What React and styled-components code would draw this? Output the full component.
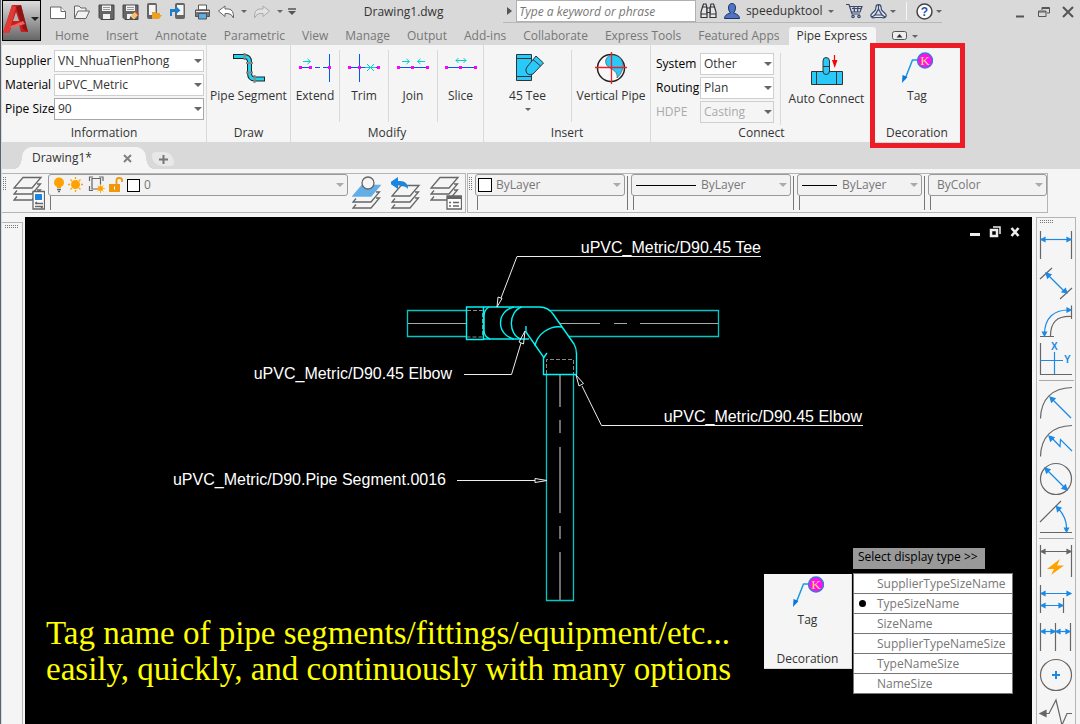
import React, { useState } from 'react';
import styled, { createGlobalStyle, css } from 'styled-components';

const MENU_TABS = ['Home', 'Insert', 'Annotate', 'Parametric', 'View', 'Manage', 'Output', 'Add-ins', 'Collaborate', 'Express Tools', 'Featured Apps', 'Pipe Express'];
const DISPLAY_TYPES = ['SupplierTypeSizeName', 'TypeSizeName', 'SizeName', 'SupplierTypeNameSize', 'TypeNameSize', 'NameSize'];

export default function App() {
    const [activeTab, setActiveTab] = useState('Pipe Express');

    return (
        <Window>
            <GlobalStyle />
            <Header>
                <AppButton aria-label="Application menu">
                    <LogoIcon />
                    <Caret $dark />
                </AppButton>
                <HeaderRows>
                    <TitleBar />
                    <MenuTabs>
                        {MENU_TABS.map(tab => (
                            <MenuTab key={tab} $active={tab === activeTab} onClick={() => setActiveTab(tab)}>{tab}</MenuTab>
                        ))}
                        <RibbonToggle aria-label="Minimize ribbon"><ToggleIcon /><Caret $small /></RibbonToggle>
                    </MenuTabs>
                </HeaderRows>
            </Header>
            <Ribbon />
            <FileTabs>
                <FileTab>
                    <span>Drawing1*</span>
                    <TabClose aria-label="Close drawing"><CrossIcon /></TabClose>
                </FileTab>
                <NewTab aria-label="New drawing"><PlusIcon /></NewTab>
            </FileTabs>
            <PropertyBar />
            <WorkArea>
                <LeftRail><RailBox><Grip $across /></RailBox></LeftRail>
                <DrawingArea />
                <DimensionBar />
            </WorkArea>
        </Window>
    )
}

function TitleBar() {
    return (
        <TitleRow>
            <QuickAccess>
                <IconButton aria-label="New"><NewIcon /></IconButton>
                <IconButton aria-label="Open"><OpenIcon /></IconButton>
                <IconButton aria-label="Save"><SaveIcon /></IconButton>
                <IconButton aria-label="Save as"><SaveIcon pencil /></IconButton>
                <IconButton aria-label="Open from mobile"><PhoneIcon folder /></IconButton>
                <IconButton aria-label="Save to mobile"><PhoneIcon /></IconButton>
                <IconButton aria-label="Plot"><PrintIcon /></IconButton>
                <IconButton aria-label="Undo"><UndoIcon /></IconButton>
                <CaretButton aria-label="Undo list"><Caret $small /></CaretButton>
                <IconButton aria-label="Redo"><UndoIcon redo /></IconButton>
                <CaretButton aria-label="Redo list"><Caret $small /></CaretButton>
                <CaretButton aria-label="Customize"><CustomizeIcon /></CaretButton>
            </QuickAccess>
            <FileName>Drawing1.dwg</FileName>
            <InfoCenter>
                <Expand aria-label="Expand search"><svg width="5" height="8"><path d="M0 0L5 4L0 8z" fill="#555" /></svg></Expand>
                <Search type="text" placeholder="Type a keyword or phrase" aria-label="Search" />
                <IconButton aria-label="Find"><BinocularsIcon /></IconButton>
                <UserButton><UserIcon />speedupktool<Caret $small /></UserButton>
                <IconButton aria-label="Store"><CartIcon /></IconButton>
                <IconButton aria-label="Autodesk 360"><TriangleIcon /></IconButton>
                <Caret $small />
                <Divider />
                <IconButton aria-label="Help"><HelpIcon /></IconButton>
                <Caret $small />
            </InfoCenter>
            <WindowButtons>
                <IconButton aria-label="Minimize"><svg width="12" height="16"><path d="M2 12.5H10" stroke="#555" strokeWidth="2" /></svg></IconButton>
                <IconButton aria-label="Restore"><RestoreIcon /></IconButton>
                <IconButton aria-label="Close"><svg width="12" height="12"><path d="M1 1L11 11M11 1L1 11" stroke="#555" strokeWidth="2" /></svg></IconButton>
            </WindowButtons>
        </TitleRow>
    )
}

function Field({ id, label, value, disabled, focused }) {
    return (
        <>
            <FieldLabel htmlFor={id} $disabled={disabled}>{label}</FieldLabel>
            <ComboBox $focused={focused} $disabled={disabled}>
                <select id={id} disabled={disabled} defaultValue={value}><option>{value}</option></select>
                <Caret />
            </ComboBox>
        </>
    )
}

function Ribbon() {
    return (
        <RibbonRow>
            <Panel $width={205}>
                <PanelBody>
                    <Fields $inset={3} $columns="49px 150px">
                        <Field id="supplier" label="Supplier" value="VN_NhuaTienPhong" />
                        <Field id="material" label="Material" value="uPVC_Metric" />
                        <Field id="size" label="Pipe Size" value="90" focused />
                    </Fields>
                </PanelBody>
                <PanelTitle>Information</PanelTitle>
            </Panel>
            <Panel $width={84}>
                <PanelBody>
                    <Tool><SegmentIcon />Pipe Segment</Tool>
                </PanelBody>
                <PanelTitle>Draw</PanelTitle>
            </Panel>
            <Panel $width={193}>
                <PanelBody>
                    <Tool $width={48}><ExtendIcon />Extend</Tool>
                    <Tool $width={49}><TrimIcon />Trim</Tool>
                    <Tool $width={49}><JoinIcon />Join</Tool>
                    <Tool><SliceIcon />Slice</Tool>
                </PanelBody>
                <PanelTitle>Modify</PanelTitle>
            </Panel>
            <Panel $width={167}>
                <PanelBody>
                    <Tool $width={87}><TeeIcon />45 Tee<Caret $small /></Tool>
                    <Tool><VerticalIcon />Vertical Pipe</Tool>
                </PanelBody>
                <PanelTitle>Insert</PanelTitle>
            </Panel>
            <Panel $width={222}>
                <PanelBody $low>
                    <Fields $inset={5} $columns="44px 74px">
                        <Field id="system" label="System" value="Other" />
                        <Field id="routing" label="Routing" value="Plan" />
                        <Field id="hdpe" label="HDPE" value="Casting" disabled />
                    </Fields>
                    <Tool><ConnectIcon />Auto Connect</Tool>
                </PanelBody>
                <PanelTitle>Connect</PanelTitle>
            </Panel>
            <Panel $width={89} $marked>
                <PanelBody>
                    <Tool><TagIcon />Tag</Tool>
                </PanelBody>
                <PanelTitle>Decoration</PanelTitle>
            </Panel>
        </RibbonRow>
    )
}

function PropertyBar() {
    return (
        <PropertyRow>
            <PropertyGroup>
                <Grip />
                <LayerButton aria-label="Layer properties"><LayersIcon kind="properties" /></LayerButton>
                <PropertyCell $width={300}>
                    <PropertyCombo>
                        <LayerStateIcons />
                        <Swatch $small />
                        <select aria-label="Layer" defaultValue="0"><option>0</option></select>
                        <Caret $pale />
                    </PropertyCombo>
                </PropertyCell>
                <LayerButton aria-label="Make current"><LayersIcon kind="current" /></LayerButton>
                <LayerButton aria-label="Layer previous"><LayersIcon kind="previous" /></LayerButton>
                <LayerButton aria-label="Layer states"><LayersIcon kind="states" /></LayerButton>
            </PropertyGroup>
            <PropertyGroup>
                <Grip />
                <PropertyCell $width={150}>
                    <PropertyCombo>
                        <Swatch />
                        <select aria-label="Color" defaultValue="ByLayer"><option>ByLayer</option></select>
                        <Caret $pale />
                    </PropertyCombo>
                </PropertyCell>
                <PropertyCell $width={160} $ruled>
                    <PropertyCombo>
                        <LineSample $width={60} />
                        <select aria-label="Linetype" defaultValue="ByLayer"><option>ByLayer</option></select>
                        <Caret $pale />
                    </PropertyCombo>
                </PropertyCell>
                <PropertyCell $width={125} $ruled>
                    <PropertyCombo>
                        <LineSample $width={35} />
                        <select aria-label="Lineweight" defaultValue="ByLayer"><option>ByLayer</option></select>
                        <Caret $pale />
                    </PropertyCombo>
                </PropertyCell>
                <PropertyCell $width={119} $ruled>
                    <PropertyCombo>
                        <select aria-label="Plot style" defaultValue="ByColor"><option>ByColor</option></select>
                        <Caret $pale />
                    </PropertyCombo>
                </PropertyCell>
            </PropertyGroup>
        </PropertyRow>
    )
}

function DrawingArea() {
    const [displayType, setDisplayType] = useState('TypeSizeName');

    return (
        <Canvas>
            <PipeDrawing />
            <CanvasButtons>
                <IconButton aria-label="Minimize drawing"><svg width="11" height="12"><path d="M0 8.500H10" stroke="#eee" strokeWidth="3" /></svg></IconButton>
                <IconButton aria-label="Restore drawing"><svg width="12" height="12" fill="none" stroke="#eee"><path d="M4 1H11V8" strokeWidth="1.5" /><path d="M2 4H8V10H2z" strokeWidth="2.5" /></svg></IconButton>
                <IconButton aria-label="Close drawing"><svg width="11" height="12"><path d="M1.500 2L8.500 10M8.500 2L1.500 10" stroke="#eee" strokeWidth="2.600" /></svg></IconButton>
            </CanvasButtons>
            <Caption>
                Tag name of pipe segments/fittings/equipment/etc...<br />
                easily, quickly, and continuously with many options
            </Caption>
            <TagPopup>
                <TagCard>
                    <Tool><TagIcon />Tag</Tool>
                    <PanelTitle>Decoration</PanelTitle>
                </TagCard>
                <TypePicker>
                    <legend>Select display type &gt;&gt;</legend>
                    <TypeList>
                        {DISPLAY_TYPES.map(type => (
                            <TypeOption key={type}>
                                <input type="radio" name="displayType" value={type} checked={type === displayType} onChange={e => setDisplayType(e.target.value)} />
                                {type}
                            </TypeOption>
                        ))}
                    </TypeList>
                </TypePicker>
            </TagPopup>
        </Canvas>
    )
}

function PipeDrawing() {
    return (
        <svg width="1007" height="507" viewBox="25 217 1007 507" fill="none">
            <g stroke="#00c8c8" strokeWidth="1.3">
                <path d="M466 310.500H407.500V336.500H466" />
                <path d="M549 310.500H718.500V336.500H569" />
                <path d="M546.500 374V600.500H573.500V374" />
            </g>
            <g stroke="#a8a8a8">
                <path d="M408 323.500H466M559 323.500H600M614 323.500H627M640 323.500H718" />
                <path d="M560 375V407M560 420V433M560 447V513M560 526V539M560 552V600" stroke="#6e6e6e" strokeWidth="2" />
                <path d="M467 310.500H482.500V337H467M546.500 374V359.500H573.500V374" stroke="#888" strokeDasharray="4 2" />
            </g>
            <g stroke="#00f5f5" strokeWidth="1.4">
                <path d="M466.500 307H483.500V339.500H466.500z" />
                <path d="M484 307H540C546 307 550 310 553 314L574 344Q576.500 348 576.500 354V374.500H543.500V357L526 332V326" />
                <path d="M543.500 358L547 353M484 339H529" />
                <path d="M489 307Q484 310 484 316V330Q484 337 490 339M514 307C496 311 496 335 514 339M522 307C508 311 508 335 521 339" />
                <path d="M535 346C537 334 550 325 562 327" />
            </g>
            <g stroke="#eee">
                <path d="M761 256.500H517L501 298M497 307L498 297L502 298.500z" />
                <path d="M464 374.500H511.500L521 343M525 331L519 342L523.500 344z" />
                <path d="M863 425.500H601.500L582 386M576 375L579 386L583.500 383.500z" />
                <path d="M457 480.500H535M547 480.500L535 478.500V482.500z" />
            </g>
            <g fill="#fff" fontFamily='"Liberation Sans", Arial, sans-serif' fontSize="16">
                <text x="761" y="253" textAnchor="end">uPVC_Metric/D90.45 Tee</text>
                <text x="452" y="379" textAnchor="end">uPVC_Metric/D90.45 Elbow</text>
                <text x="862" y="422" textAnchor="end">uPVC_Metric/D90.45 Elbow</text>
                <text x="446" y="485" textAnchor="end">uPVC_Metric/D90.Pipe Segment.0016</text>
            </g>
        </svg>
    )
}

/* dimension toolbar, one drawing per button */
const Blue = props => <g stroke="#1a8ae6" fill="#1a8ae6" strokeWidth="1.2" {...props} />;

function DimensionBar() {
    return (
        <SideBar>
            <Grip $across />
            <DimButton label="Linear">
                <path d="M.5 2V30M31.500 2V30" />
                <Blue><path d="M3 10.500H29" /><path d="M1 10.500L5 8.500V12.500zM31 10.500L27 8.500V12.500z" /></Blue>
            </DimButton>
            <DimButton label="Aligned">
                <path d="M0 12L12 1M20 32L32 21" />
                <Blue><path d="M8 8L25 25" /><path d="M6 6L11 7.500L7.500 11zM27 26L22 25L25.500 21.500z" /></Blue>
            </DimButton>
            <DimButton label="Arc length">
                <path d="M31.500 .5V14M0 31.500H14M10.500 31C10.500 17 17 11 31 11.500" />
                <Blue><path d="M4.500 29C4.500 13 14 5 28 5" fill="none" /><path d="M4.500 31L2.500 27H6.500zM31 5L27 3V7z" /></Blue>
            </DimButton>
            <DimButton label="Ordinate">
                <path d="M.5 0V31.500H32" />
                <Blue><path d="M0 17.500H23M14.500 9V31" /><g stroke="none" fontFamily="Liberation Sans" fontWeight="700" fontSize="10"><text x="11" y="7">X</text><text x="24" y="20">Y</text></g></Blue>
            </DimButton>
            <BarRule />
            <DimButton label="Radius">
                <path d="M.5 31.500C1 12 12 1 32 .5" />
                <Blue><path d="M12 12L31 31" /><path d="M10 10L15 11.500L11.500 15z" /></Blue>
            </DimButton>
            <DimButton label="Jogged">
                <path d="M.5 31.500C1 12 12 1 32 .5" />
                <Blue><path d="M11 12L20 21.500L20.500 14.500L32 26" fill="none" /><path d="M9 11L14 12.500L10.500 16z" /></Blue>
            </DimButton>
            <DimButton label="Diameter">
                <circle cx="16" cy="16" r="15.500" />
                <Blue><path d="M7 7L25 25" /><path d="M5 5L10 6.500L6.500 10zM27 27L22 25.500L25.500 22z" /></Blue>
            </DimButton>
            <DimButton label="Angular">
                <path d="M0 21L21 0M0 31.500H32" />
                <Blue><path d="M18 7Q27 17 26.500 28" fill="none" /><path d="M16.500 5.500L21 7L17.500 10.500zM26.500 31L24.500 27H28.500z" /></Blue>
            </DimButton>
            <BarRule />
            <DimButton label="Quick">
                <path d="M.5 0V32M31.500 0V32M3 6.500H29" />
                <path d="M1 6.500L5 4.500V8.500zM31 6.500L27 4.500V8.500z" fill="#666" />
                <path d="M20 14L7 24H14L11 30L24 20.500H17L20 14z" fill="#ffa200" stroke="none" />
            </DimButton>
            <DimButton label="Baseline">
                <path d="M.5 2V30M23.500 15V30" />
                <Blue><path d="M3 10.500H29M3 22.500H21" /><path d="M1 10.500L5 8.500V12.500zM31 10.500L27 8.500V12.500zM1 22.500L5 20.500V24.500zM23 22.500L19 20.500V24.500z" /></Blue>
            </DimButton>
            <DimButton label="Continue">
                <path d="M.5 2V30M15.500 2V30M30.500 2V30" />
                <Blue><path d="M3 10.500H28" /><path d="M1 10.500L5 8.500V12.500zM15 10.500L11 8.500V12.500zM16 10.500L20 8.500V12.500zM30 10.500L26 8.500V12.500z" /></Blue>
            </DimButton>
            <DimButton label="Center mark">
                <circle cx="16" cy="16" r="15.500" />
                <Blue><path d="M12 16H20M16 12V20" strokeWidth="2" /></Blue>
            </DimButton>
            <DimButton label="Jogged linear">
                <path d="M4 16.500H9L16 3L22 28L27 16.500H32" />
                <path d="M0 16.500L6 13.500V19.500z" fill="#666" />
            </DimButton>
        </SideBar>
    )
}

function DimButton({ label, children }) {
    return (
        <SideButton aria-label={label}>
            <svg width="32" height="32" fill="none" stroke="#666" strokeWidth="1.2" overflow="visible">{children}</svg>
        </SideButton>
    )
}

function LogoIcon() {
    return (
        <svg width="28" height="30" viewBox="0 0 28 30">
            <path d="M9 1H18L25 28H18L16 21H9L6 29H0z" fill="#c81e1e" />
            <path d="M18 1L25 28L20 25L13 3z" fill="#8f1414" />
            <path d="M9 1L13 3L6 29H0z" fill="#e03a34" />
            <path d="M13 8L16 17H10z" fill="#b5b5b5" />
            <path d="M6 23L20 17L22 20L9 24z" fill="#e8645c" />
        </svg>
    )
}

const ToggleIcon = () => (
    <svg width="16" height="10" fill="none"><rect x=".5" y=".5" width="14" height="8" rx="2" stroke="#555" fill="#eee" /><path d="M4.500 6.500L7.500 3L10.500 6.500z" fill="#333" /></svg>
);
const CrossIcon = () => <svg width="9" height="9"><path d="M1 1L8 8M8 1L1 8" stroke="#808080" strokeWidth="2" /></svg>;
const PlusIcon = () => <svg width="9" height="9"><path d="M4.500 0V9M0 4.500H9" stroke="#777" strokeWidth="2" /></svg>;
const CustomizeIcon = () => <svg width="8" height="8"><path d="M0 1H8" stroke="#555" strokeWidth="1.500" /><path d="M0 3H8L4 7z" fill="#555" /></svg>;

const NewIcon = () => (
    <svg width="16" height="16" fill="#fff" stroke="#666"><path d="M.5 3H11L15.500 7.500V14.500H.5z" /><path d="M11 3V7.500H15.500" /></svg>
);
const OpenIcon = () => (
    <svg width="16" height="16" fill="#f2f2f2" stroke="#666"><path d="M.5 14V2H5L7 4H12V7" /><path d="M.5 14.500L4 7H15.500L12 14.500z" /></svg>
);
const SaveIcon = ({ pencil }) => (
    <svg width="17" height="16">
        <path d="M1 1H16V15.500H3L1 13.500z" fill="#666" stroke="#444" />
        <path d="M4 1.500H13V7H4zM5 10H12V15H5z" fill="#f2f2f2" />
        <path d="M5 3.500H12M5 5.500H12" stroke="#999" />
        {pencil && <><path d="M7 16L8.500 12L12 15.500z" fill="#555" /><path d="M8.500 12L13 8L16 11L12 15.500z" fill="#f5c469" /><path d="M13 8L14 7L17 10L16 11z" fill="#e33" /></>}
    </svg>
);
const PhoneIcon = ({ folder }) => (
    <svg width="16" height="17">
        <rect x={folder ? 1.5 : 5.5} y=".5" width="9" height="15" rx="1" fill="#666" stroke="#666" />
        <path d={folder ? 'M3 2H9.500V12H3z' : 'M7 2H13.500V12H7z'} fill="#f5f5f5" />
        {folder
            ? <path d="M6 16V9H9L10 10H14V12H16L13 16z" fill="#f0a020" />
            : <path d="M0 6H6V3L10.500 7.500L6 11V9H2V13H0z" fill="#1a7fd0" />}
    </svg>
);
const PrintIcon = () => (
    <svg width="17" height="16" stroke="#555"><path d="M4.500 1H12.500V6H4.500z" fill="#fff" /><path d="M1.500 6H15.500V12.500H1.500z" fill="#777" /><path d="M2 7.500H15" stroke="#eee" /><path d="M4.500 9.500H12.500V15H4.500z" fill="#5aaeea" /></svg>
);
const UndoIcon = ({ redo }) => (
    <svg width="17" height="14" fill={redo ? '#e2e2e2' : '#fff'} stroke={redo ? '#aaa' : '#666'}>
        <path d="M.5 6L7 1V4H11Q16 5 15.500 13Q13.500 8.500 10 8.500H7V11.500z" transform={redo ? 'translate(16 0) scale(-1 1)' : undefined} />
    </svg>
);
const BinocularsIcon = () => (
    <svg width="17" height="16" fill="#e4e6ea" stroke="#333" strokeWidth="1.200">
        <path d="M3.500 1H6L7 5V14.500H1V9L2.500 4z" />
        <path d="M11 1H13.500L14.500 4L16 9V14.500H10V5z" />
        <path d="M7 5H10V9.500H7zM2.500 4H7M10 4H14.500M1 11H7M10 11H16" />
    </svg>
);
const UserIcon = () => (
    <svg width="16" height="17" fill="#4f74c4" stroke="#1f3566"><path d="M4.500 5Q4.500 .5 8 .5Q11.500 .5 11.500 5Q11.500 8 9.500 10Q15.500 11.500 15.500 15.500H.5Q.5 11.500 6.500 10Q4.500 8 4.500 5z" /></svg>
);
const CartIcon = () => (
    <svg width="17" height="16" fill="none" stroke="#38486e" strokeWidth="1.200"><path d="M0 1.500H3L6 11H14M3.500 3.500H16L14 9H5.500M6 5.500H15M8 3.500L8.500 9M12 3.500L11.500 9" /><circle cx="7" cy="13.500" r="1.200" /><circle cx="13" cy="13.500" r="1.200" /></svg>
);
const TriangleIcon = () => (
    <svg width="17" height="15" fill="#e5e8ee" stroke="#38486e" strokeWidth="1.200">
        <path d="M6 3Q6 .6 8.500 .6Q11 .6 11 3L11.500 6L15 9.500Q17 11 15.500 13Q14 14.400 12 13.500H5Q3 14.400 1.500 13Q0 11 2 9.500L5.500 6z" />
        <path d="M8.500 5L12 11H5z" fill="#d9d9d9" />
        <path d="M8.500 1V5M5 11L2 13M12 11L15 13" />
    </svg>
);
const HelpIcon = () => (
    <svg width="17" height="17"><circle cx="8.500" cy="8.500" r="7.500" fill="#fff" stroke="#444" strokeWidth="1.500" /><text x="8.500" y="13" textAnchor="middle" fontFamily="Liberation Sans" fontWeight="700" fontSize="12" fill="#2a55b0">?</text></svg>
);
const RestoreIcon = () => (
    <svg width="12" height="12" fill="none" stroke="#555"><path d="M4 4V1.500H11.500V7H9" /><path d="M4 2H11" strokeWidth="2" /><path d="M.500 5H8V10.500H.5zM1 6H8" /></svg>
);

const SegmentIcon = () => (
    <svg width="32" height="32" viewBox="0 0 32 32">
        <path d="M0 4.500H11Q16.500 4.500 16.500 10V21Q16.500 27 22 27H32" fill="none" stroke="#222" strokeWidth="5" />
        <path d="M1 4.500H11Q16.500 4.500 16.500 10V21Q16.500 27 22 27H31" fill="none" stroke="#22d3ee" strokeWidth="3" />
        <path d="M11.500 1V8M13 11H20M13 20.500H20M21.500 23V31" stroke="#888" strokeWidth="2" />
    </svg>
);
const Node = ({ x }) => <rect x={x} y="14" width="3" height="3" fill="#f0f" />;
const ExtendIcon = () => (
    <svg width="32" height="32" fill="none">
        <path d="M1 15.500H11M16 15.500H21M24 15.500H30M30.500 2V30" stroke="#0058f0" />
        <path d="M4 9.500H11M8.500 7L11.500 9.500L8.500 12" stroke="#00d0d0" />
        <Node x={0} /><Node x={10} /><Node x={29} />
    </svg>
);
const TrimIcon = () => (
    <svg width="32" height="32" fill="none">
        <path d="M1 15.500H19M26 15.500H31M11.500 2V30" stroke="#0058f0" />
        <path d="M19 12L26 19M26 12L19 19M17 15.500H28" stroke="#00d0d0" />
        <Node x={0} /><Node x={10} /><Node x={29} />
    </svg>
);
const JoinIcon = () => (
    <svg width="32" height="32" fill="none">
        <path d="M1 15.500H31" stroke="#0058f0" />
        <path d="M5 9.500H12M9.500 7L12.500 9.500L9.500 12M28 9.500H21M23.500 7L20.500 9.500L23.500 12" stroke="#00d0d0" />
        <Node x={0} /><Node x={14} /><Node x={29} />
    </svg>
);
const SliceIcon = () => (
    <svg width="32" height="32" fill="none">
        <path d="M1 15.500H31" stroke="#0058f0" />
        <path d="M11 8.500H21M13.500 6L11 8.500L13.500 11M18.500 6L21 8.500L18.500 11" stroke="#00d0d0" />
        <Node x={0} /><Node x={14} /><Node x={29} />
    </svg>
);
const TeeIcon = () => (
    <svg width="32" height="32" fill="#29c9fa" stroke="#333">
        <path d="M4.500 2.500H19.500V28.500H4.500zM4.500 6.500H19.500M4.500 24.500H19.500" />
        <path d="M15 15L24 4L31.500 11L21 22Q15 24 14 19Q13.500 17 15 15z" />
        <path d="M21 7.500L28.500 14" />
    </svg>
);
const VerticalIcon = () => (
    <svg width="32" height="32" fill="none">
        <circle cx="16" cy="16" r="13.500" fill="#f8f8f8" stroke="#222" strokeWidth="1.500" />
        <path d="M16 3C29 2 32 17 22 26C23 20 18 18 15 16C9 13 9 5 16 3z" fill="#29c9fa" stroke="#555" strokeWidth=".7" />
        <path d="M16.500 0V32M0 15.500H32" stroke="#f02020" strokeWidth="1.300" />
    </svg>
);
const ConnectIcon = () => (
    <svg width="32" height="32" fill="#29c9fa" stroke="#333">
        <path d="M.5 16.500H31.500V29.500H.5zM5.500 16.500V29.500M25.500 16.500V29.500" />
        <path d="M12 11V6Q12 2.500 15 2.500Q18.500 2.500 18.500 6V16Q18.500 19.500 15 19.500Q12 19.500 12 16zM12 11.500H18.500" />
        <path d="M23.500 0V6" stroke="red" strokeWidth="1.200" /><path d="M21 5H26.500L23.700 13z" fill="red" stroke="none" />
    </svg>
);
const TagIcon = () => (
    <svg width="32" height="32">
        <path d="M16 8H11.500L4 27" fill="none" stroke="#189ae0" strokeWidth="1.500" />
        <path d="M1 31L1.500 23L6.500 25z" fill="#0878e0" />
        <circle cx="24" cy="8.500" r="7.500" fill="#ff10f0" stroke="#3878d8" strokeWidth="1.300" />
        <text x="24" y="13" textAnchor="middle" fontFamily="Liberation Serif" fontSize="13" fill="#ffe060">K</text>
    </svg>
);

function LayersIcon({ kind }) {
    const low = kind === 'current' || kind === 'previous';
    return (
        <svg width="32" height="36" fill="none" stroke="#666" strokeWidth="1.300">
            <g transform={low ? 'translate(0 8)' : undefined}>
                <path d="M10 2.500H28L19 13H1z" fill={kind === 'current' ? '#64aee8' : '#f5f5f5'} stroke={kind === 'current' ? '#64aee8' : '#666'} />
                <path d="M24 9H27.500L19 19H1L4 15.500M24 15H27.500L19 25H1L4 21.500" />
            </g>
            {kind === 'current' && <circle cx="16" cy="8" r="6" fill="#f5f5f5" />}
            {kind === 'previous' && <path d="M0 7L9 1V5Q19 4 19 13Q16 9 9 9.500V13z" fill="#1a86e0" stroke="none" transform="translate(-2 1)" />}
            {kind === 'properties' && <g><path d="M20 16.500H31.500V34H20z" fill="#fff" /><path d="M22 19H29V25H22z" fill="#1a86e0" stroke="none" /><path d="M22 28.500H30M22 31.500H30M24 27L22 28.500M28 33L30 31.500" /></g>}
            {kind === 'states' && <g><path d="M17 21H31.500V34H17z" fill="#fff" /><path d="M17 22.500H31.500" strokeWidth="3" /><path d="M19 27.500H21M23 27.500H29M19 31H21M23 31H29" /></g>}
        </svg>
    )
}

const LayerStateIcons = () => (
    <svg width="72" height="18" fill="none">
        <circle cx="8" cy="6.500" r="5" fill="#ffa200" /><path d="M6 9H10V12H6z" fill="#ffa200" /><path d="M6 13.500H10M7 15.500H9" stroke="#666" strokeWidth="1.500" />
        <circle cx="24.500" cy="8.500" r="4.500" fill="#ffa200" />
        <path d="M24.500 1V3M24.500 14V16M17 8.500H19M30 8.500H32M19.500 3.500L21 5M28 12L29.500 13.500M29.500 3.500L28 5M21 12L19.500 13.500" stroke="#ffa200" strokeWidth="1.300" />
        <path d="M41 2.500H49.500V9M47 13H41V2M38.500 5V1H42M48 1H52V5M38.500 10V14.500H42" stroke="#666" strokeWidth="1.200" />
        <circle cx="49.500" cy="12.500" r="2.500" fill="#ffa200" /><path d="M49.500 8V17M45 12.500H54M46.500 9.500L52.500 15.500M52.500 9.500L46.500 15.500" stroke="#ffa200" strokeWidth=".8" />
        <path d="M58 8H69V16H58z" fill="#f0980c" /><path d="M65.500 8V4Q65.500 2 68 2Q71 2 71 4V6" stroke="#f0980c" strokeWidth="1.800" /><path d="M63.500 10.500V13.500" stroke="#fff" />
    </svg>
);

const GlobalStyle = createGlobalStyle`
    * {
        box-sizing: border-box;
    }
    body {
        margin: 0;
        background: #d9d9d9;
    }
    body, button, input, select {
        font-family: "Open Sans", "Segoe UI", sans-serif;
        font-size: 12px;
        line-height: 16px;
        color: #333;
    }
    button {
        padding: 0;
        border: none;
        background: none;
        white-space: nowrap;
    }
    svg {
        display: block;
        flex-shrink: 0;
    }
    select {
        appearance: none;
        min-width: 0;
        border: none;
        outline: none;
        background: transparent;
        opacity: 1;
    }
`

const Window = styled.div`
    height: 100vh;
    padding-left: 1px;
    border-left: 1px solid #5a646c;
    display: flex;
    flex-direction: column;
    overflow: hidden;
`
const Caret = styled.i`
    flex-shrink: 0;
    width: 0;
    border: ${p => (p.$small ? 3 : 4)}px solid transparent;
    border-top-color: ${p => (p.$pale ? '#aaa' : p.$dark ? '#222' : '#666')};
    border-bottom: none;
    pointer-events: none;
`
const Header = styled.header`
    height: 45px;
    flex-shrink: 0;
    display: flex;
`
const AppButton = styled.button`
    width: 39px;
    height: 41px;
    padding-bottom: 4px;
    display: flex;
    align-items: center;
    border: 1px solid #000;
    background: linear-gradient(#dcdcdc, #666);
`
const HeaderRows = styled.div`
    flex: 1;
    min-width: 0;
    display: flex;
    flex-direction: column;
`
const TitleRow = styled.div`
    height: 23px;
    display: flex;
    justify-content: space-between;
    align-items: center;
`
const QuickAccess = styled.div`
    padding-left: 5px;
    display: flex;
    align-items: center;
`
const IconButton = styled.button`
    width: 24px;
    height: 20px;
    display: flex;
    align-items: center;
    justify-content: center;
`
const CaretButton = styled(IconButton)`
    width: 12px;
`
const FileName = styled.div`
    padding-left: 6px;
`
const InfoCenter = styled.div`
    height: 23px;
    margin-right: 6px;
    display: flex;
    align-items: center;
    border-bottom: 1px solid #b8b8b8;
`
const Expand = styled(IconButton)`
    width: 13px;
`
const Search = styled.input`
    width: 180px;
    height: 22px;
    padding: 0 2px;
    border: 1px solid #b0b0b0;
    background: #fff;

    &::placeholder {
        font-style: italic;
        color: #777;
    }
`
const UserButton = styled.button`
    width: 122px;
    padding: 0 8px 0 4px;
    display: flex;
    align-items: center;
    justify-content: space-between;
`
const Divider = styled.div`
    width: 1px;
    height: 18px;
    margin: 0 5px 0 10px;
    background: #f5f5f5;
`
const WindowButtons = styled.div`
    display: flex;
`
const MenuTabs = styled.nav`
    height: 22px;
    padding: 4px 0 0 6px;
    display: flex;
`
const MenuTab = styled.button`
    height: 18px;
    padding: 0 9px 0 8px;
    line-height: 16px;
    color: #777;

    ${p => p.$active && css`
        color: #333;
        border-radius: 3px 3px 0 0;
        background: #f5f5f5;
    `}
`
const RibbonToggle = styled.button`
    margin-left: 16px;
    display: flex;
    align-items: center;
    gap: 4px;
`

const RibbonRow = styled.section`
    flex-shrink: 0;
    display: flex;
`
const Panel = styled.section`
    position: relative;
    width: ${p => p.$width}px;
    flex-shrink: 0;
    border-right: 1px solid #d9d9d9;
    background: #f5f5f5;

    ${p => p.$marked && css`
        &::after {
            content: "";
            position: absolute;
            inset: -2px -4px -6px -3px;
            border: 5px solid #ee1c25;
            pointer-events: none;
        }
    `}
`
const PanelBody = styled.div`
    height: 80px;
    padding-top: ${p => (p.$low ? 8 : 5)}px;
    display: flex;
`
const PanelTitle = styled.div`
    height: 17px;
    text-align: center;
`
const Fields = styled.div`
    padding-left: ${p => p.$inset}px;
    display: grid;
    grid-template-columns: ${p => p.$columns};
    grid-auto-rows: 22px;
    row-gap: 2px;
    align-content: start;
    align-items: center;
`
const FieldLabel = styled.label`
    white-space: nowrap;
    color: ${p => (p.$disabled ? '#aaa' : '#000')};
`
const ComboBox = styled.div`
    height: 22px;
    display: grid;
    align-items: center;
    border: 1px solid ${p => (p.$focused ? '#a8a8a8' : '#cfcfcf')};
    background: ${p => (p.$disabled ? '#f5f5f5' : '#fff')};

    select {
        grid-area: 1 / 1;
        padding: 0 3px;
        color: ${p => (p.$disabled ? '#aaa' : '#333')};
    }
    i {
        grid-area: 1 / 1;
        justify-self: end;
        margin-right: 1px;
    }
`
const Tool = styled.button`
    flex: ${p => (p.$width ? `0 0 ${p.$width}px` : '1 0 auto')};
    height: 72px;
    padding-top: 2px;
    display: flex;
    flex-direction: column;
    align-items: center;
    gap: 4px;

    & + &, ${Fields} + & {
        border-left: 1px solid #d9d9d9;
    }
    ${Fields} + & {
        margin-left: 6px;
    }
`

const FileTabs = styled.nav`
    height: 27px;
    flex-shrink: 0;
    padding-left: 20px;
    display: flex;
    align-items: flex-end;
`
const FileTab = styled.div`
    position: relative;
    width: 124px;
    height: 22px;
    padding: 0 14px 0 10px;
    display: flex;
    align-items: center;
    justify-content: space-between;
    border-radius: 10px 10px 0 0;
    background: #f5f5f5;

    &::before, &::after {
        content: "";
        position: absolute;
        bottom: 0;
        width: 8px;
        height: 12px;
    }
    &::before {
        left: -8px;
        background: radial-gradient(ellipse 8px 12px at 0 0, transparent 98%, #f5f5f5);
    }
    &::after {
        right: -8px;
        background: radial-gradient(ellipse 8px 12px at 100% 0, transparent 98%, #f5f5f5);
    }
`
const TabClose = styled.button``
const NewTab = styled.button`
    width: 22px;
    height: 14px;
    margin: 0 0 3px 6px;
    display: flex;
    align-items: center;
    justify-content: center;
    border-radius: 4px 10px 4px 10px;
    background: #e8e8e8;
`

const PropertyRow = styled.section`
    flex-shrink: 0;
    height: 48px;
    padding-top: 4px;
    display: flex;
    gap: 1px;
    background: #f5f5f5;
`
const PropertyGroup = styled.div`
    height: 40px;
    display: flex;
    border: 1px solid #b5b5b5;
    border-left: none;

    & + & {
        border-left: 1px solid #b5b5b5;
    }
`
/* dots on every second pixel */
const Grip = styled.div`
    flex-shrink: 0;
    width: ${p => (p.$across ? 13 : 3)}px;
    height: ${p => (p.$across ? 3 : 13)}px;
    margin: ${p => (p.$across ? '2px 3px 3px' : '3px 3px 0 1px')};
    background:
        linear-gradient(90deg, transparent 50%, #f5f5f5 50%) 0 0 / 2px 2px,
        linear-gradient(#777 50%, transparent 50%) 0 0 / 2px 2px;
`
const LayerButton = styled.button`
    width: 39px;
    height: 38px;
    display: flex;
    align-items: center;
    justify-content: center;
`
const PropertyCell = styled.div`
    width: ${p => p.$width}px;
    height: 36px;
    position: relative;

    &::after {
        content: "";
        display: block;
        height: 14px;
        margin-left: 2px;
        border-left: 1px solid #777;
    }
    ${p => p.$ruled && css`
        margin-left: 6px;

        &::before {
            content: "";
            position: absolute;
            left: -4px;
            top: 2px;
            bottom: 0;
            border-left: 1px solid #777;
        }
    `}
`
const PropertyCombo = styled.div`
    height: 22px;
    padding: 0 3px 0 2px;
    display: flex;
    align-items: center;
    border: 1px solid #999;
    border-radius: 3px;
    background: #f2f2f2;

    select {
        flex: 1;
        padding: 0 4px;
        color: #777;
    }
    select:first-child {
        padding-left: 6px;
    }
`
const Swatch = styled.span`
    flex-shrink: 0;
    width: ${p => (p.$small ? 13 : 14)}px;
    height: ${p => (p.$small ? 13 : 14)}px;
    margin-left: ${p => (p.$small ? 4 : 0)}px;
    border: 1px solid #000;
    background: #fff;
`
const LineSample = styled.span`
    flex-shrink: 0;
    width: ${p => p.$width}px;
    margin: 0 1px 0 2px;
    border-top: 1px solid #000;
`

const WorkArea = styled.main`
    flex: 1;
    min-height: 0;
    display: flex;
    background: #f5f5f5;
`
const LeftRail = styled.aside`
    width: 23px;
    flex-shrink: 0;
    padding: 5px 2px 0 0;
    display: flex;
`
const RailBox = styled.div`
    flex: 1;
    border: solid #b5b5b5;
    border-width: 1px 1px 0 0;
`
const Canvas = styled.div`
    flex: 1;
    min-width: 0;
    position: relative;
    overflow: hidden;
    background: #000;
`
const CanvasButtons = styled.div`
    position: absolute;
    top: 5px;
    right: 7px;
    display: flex;

    button {
        width: 20px;
    }
`
const Caption = styled.p`
    position: absolute;
    left: 21px;
    bottom: 37px;
    margin: 0;
    font-family: "Liberation Serif", "Times New Roman", serif;
    font-size: 33px;
    line-height: 36px;
    white-space: nowrap;
    color: #ff0;
`
const TagPopup = styled.div`
    position: absolute;
    right: 19px;
    bottom: 30px;
    display: flex;
    gap: 1px;
`
const TagCard = styled.div`
    width: 88px;
    height: 95px;
    margin-top: 26px;
    display: flex;
    flex-direction: column;
    justify-content: space-between;
    border-right: 1px solid #d9d9d9;
    border-bottom: 1px solid #d9d9d9;
    background: #f5f5f5;
`
const TypePicker = styled.fieldset`
    margin: 0;
    padding: 0;
    border: none;

    legend {
        height: 21px;
        width: 132px;
        margin-bottom: 4px;
        padding: 1px 5px;
        background: #999;
        color: #000;
    }
`
const TypeList = styled.div`
    width: 160px;
    border: 1px solid #777;
    border-top: none;
    background: #fff;
`
const TypeOption = styled.label`
    height: 20px;
    padding-left: 5px;
    display: flex;
    align-items: center;
    gap: 11px;
    border-top: 1px solid #777;
    color: #777;

    input {
        appearance: none;
        width: 7px;
        height: 7px;
        margin: 0;
        border-radius: 50%;
    }
    input:checked {
        background: #000;
    }
`
const SideBar = styled.aside`
    width: 40px;
    flex-shrink: 0;
    margin: 0 4px;
    display: flex;
    flex-direction: column;
    overflow: hidden;
    border: 1px solid #b5b5b5;
    border-bottom: none;
`
const SideButton = styled.button`
    height: 38px;
    flex-shrink: 0;
    display: flex;
    align-items: center;
    justify-content: center;
`
const BarRule = styled.hr`
    width: 35px;
    flex-shrink: 0;
    margin: 2px auto 3px;
    border: none;
    border-top: 1px solid #aaa;
`
